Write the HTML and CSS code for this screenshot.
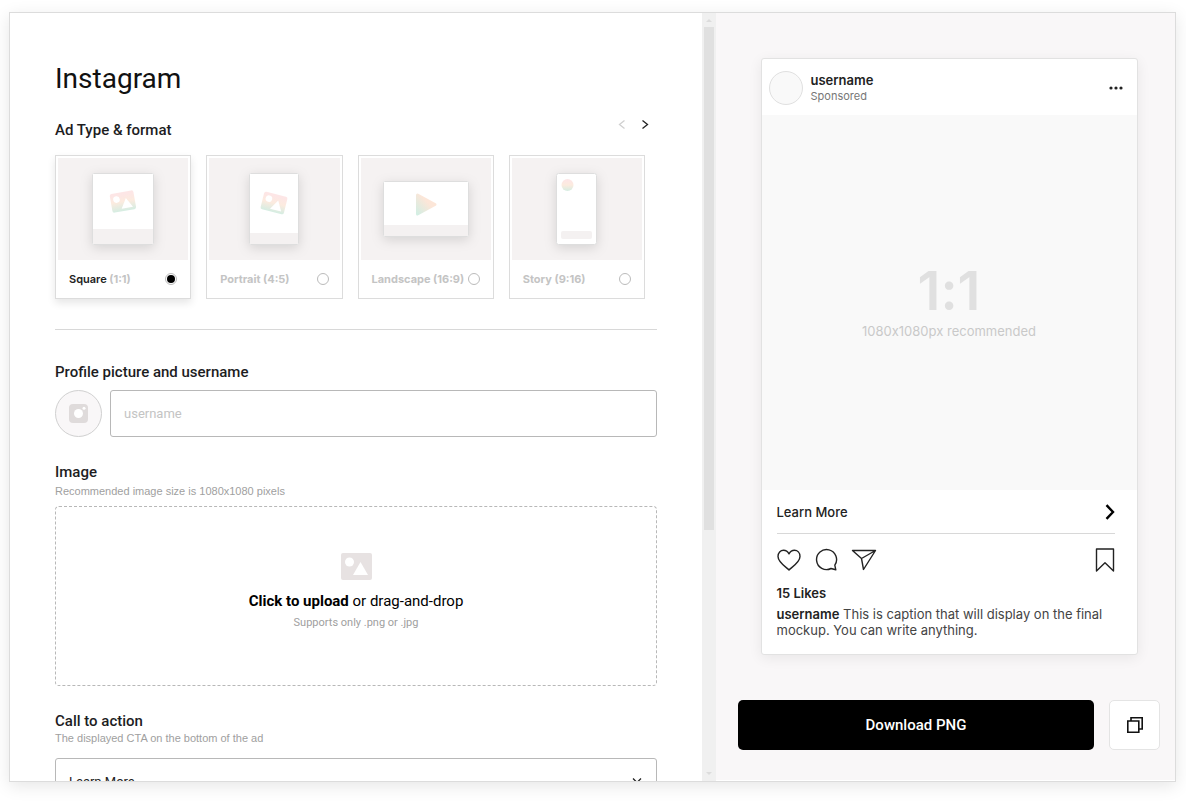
FILE: index.html
```html
<!DOCTYPE html>
<html lang="en">
<head>
    <meta charset="UTF-8" />
    <meta name="viewport" content="width=device-width, initial-scale=1" />
    <title>Instagram</title>
    <link rel="stylesheet" href="styles.css">
</head>
<body>
    <main class="window">
        <form class="editor" tabindex="0">
            <h1>Instagram</h1>

            <div class="format-head">
                <h2>Ad Type &amp; format</h2>
                <div class="arrows">
                    <button type="button" class="arrow" aria-label="Previous" disabled>
                        <svg width="8" height="10" viewBox="0 0 8 10"><path d="M6.500 0.500 1.500 4.500l5 4" /></svg>
                    </button>
                    <button type="button" class="arrow" aria-label="Next">
                        <svg width="8" height="10" viewBox="0 0 8 10"><path d="M1.500 0.500l5 4-5 4" /></svg>
                    </button>
                </div>
            </div>

            <div class="formats">
                <label class="format selected">
                    <span class="thumb">
                        <svg class="shape" width="62" height="72" viewBox="0 0 62 72">
                            <defs>
                                <linearGradient id="fade" x1="0" y1="0" x2="0" y2="1">
                                    <stop offset="0.1" stop-color="#fde6e6" />
                                    <stop offset="0.5" stop-color="#fcebdf" />
                                    <stop offset="1" stop-color="#d5ede2" />
                                </linearGradient>
                                <linearGradient id="fadePlay" x1="1" y1="0" x2="0" y2="1">
                                    <stop offset="0.4" stop-color="#fce6d8" />
                                    <stop offset="1" stop-color="#d3eee3" />
                                </linearGradient>
                            </defs>
                            <rect x="0.5" y="0.5" width="61" height="71" rx="1" fill="#fff" stroke="#dedede" />
                            <path d="M1 56h60v15H1z" fill="#f4f1f1" />
                            <g transform="rotate(-10 31 29)">
                                <rect x="19" y="19" width="24" height="19" rx="2" fill="url(#fade)" />
                                <circle cx="25" cy="25.500" r="3.300" fill="#fff" />
                                <path d="M28.500 35.500 34.500 25.500l5.500 10z" fill="#fff" />
                            </g>
                        </svg>
                    </span>
                    <span class="format-row">
                        <span><b>Square</b> (1:1)</span>
                        <input type="radio" name="format" checked>
                    </span>
                </label>
                <label class="format">
                    <span class="thumb">
                        <svg class="shape" width="50" height="72" viewBox="0 0 50 72">
                            <rect x="0.5" y="0.5" width="49" height="71" rx="1" fill="#fff" stroke="#dedede" />
                            <path d="M1 60h48v11H1z" fill="#f4f1f1" />
                            <g transform="rotate(14 25 30)">
                                <rect x="13" y="21" width="24" height="18" rx="2" fill="url(#fade)" />
                                <circle cx="19" cy="27" r="3.300" fill="#fff" />
                                <path d="M22.500 36.500 28.500 26.500l5.500 10z" fill="#fff" />
                            </g>
                        </svg>
                    </span>
                    <span class="format-row">
                        <span>Portrait (4:5)</span>
                        <input type="radio" name="format">
                    </span>
                </label>
                <label class="format">
                    <span class="thumb">
                        <svg class="shape" width="86" height="56" viewBox="0 0 86 56">
                            <rect x="0.5" y="0.5" width="85" height="55" rx="1" fill="#fff" stroke="#dedede" />
                            <path d="M1 44h84v11H1z" fill="#f4f1f1" />
                            <path d="M34.500 14 52 23.500 34.500 33z" fill="url(#fadePlay)" stroke="url(#fadePlay)" stroke-width="3" stroke-linejoin="round" />
                        </svg>
                    </span>
                    <span class="format-row">
                        <span>Landscape (16:9)</span>
                        <input type="radio" name="format">
                    </span>
                </label>
                <label class="format">
                    <span class="thumb">
                        <svg class="shape" width="41" height="72" viewBox="0 0 41 72">
                            <rect x="0.5" y="0.5" width="40" height="71" rx="2" fill="#fff" stroke="#dedede" />
                            <circle cx="11.500" cy="12" r="6" fill="url(#fade)" />
                            <rect x="5" y="58" width="31" height="8" rx="2" fill="#f4f1f1" />
                        </svg>
                    </span>
                    <span class="format-row">
                        <span>Story (9:16)</span>
                        <input type="radio" name="format">
                    </span>
                </label>
            </div>

            <hr>

            <label class="title" for="username">Profile picture and username</label>
            <div class="profile">
                <button type="button" class="picture" aria-label="Profile picture">
                    <svg width="19" height="19" viewBox="0 0 19 19">
                        <rect width="19" height="19" rx="4" fill="#dfdbdb" />
                        <circle cx="9.500" cy="9.500" r="4.500" fill="#fff" />
                        <circle cx="15" cy="4.300" r="1.500" fill="#fff" />
                    </svg>
                </button>
                <input type="text" class="field" id="username" placeholder="username">
            </div>

            <h2 class="title">Image</h2>
            <p class="hint">Recommended image size is 1080x1080 pixels</p>
            <button type="button" class="dropzone">
                <svg width="31" height="27" viewBox="0 0 31 27">
                    <rect width="31" height="27" rx="2" fill="#e7e2e2" />
                    <circle cx="8.500" cy="9" r="4.500" fill="#fff" />
                    <path d="M12 22 19.500 9 27 22z" fill="#fff" />
                </svg>
                <span class="drop-text"><b>Click to upload</b> or drag-and-drop</span>
                <span class="drop-hint">Supports only .png or .jpg</span>
            </button>

            <label class="title" for="cta">Call to action</label>
            <p class="hint cta-hint">The displayed CTA on the bottom of the ad</p>
            <div class="select-wrap">
                <select class="field" id="cta">
                    <option>Learn More</option>
                </select>
                <svg class="caret" width="10" height="8" viewBox="0 0 10 8"><path d="M1 1.500l4 4 4-4" /></svg>
            </div>
        </form>

        <div class="scrollbar" aria-hidden="true">
            <svg width="6" height="3" viewBox="0 0 6 3"><path d="M0 3 3 0l3 3z" /></svg>
            <div class="track"><div class="handle"></div></div>
            <svg width="6" height="3" viewBox="0 0 6 3"><path d="M0 0h6L3 3z" /></svg>
        </div>

        <section class="preview">
            <article class="post">
                <header class="post-head">
                    <span class="avatar"></span>
                    <div class="author">
                        <strong>username</strong>
                        <span>Sponsored</span>
                    </div>
                    <svg width="14" height="4" viewBox="0 0 14 4" fill="#222"><circle cx="2" cy="2" r="1.600" /><circle cx="7" cy="2" r="1.600" /><circle cx="12" cy="2" r="1.600" /></svg>
                </header>
                <div class="media">
                    <span class="ratio">1:1</span>
                    <span class="size">1080x1080px recommended</span>
                </div>
                <div class="post-body">
                    <div class="learn">
                        <span>Learn More</span>
                        <svg width="10" height="16" viewBox="0 0 10 16"><path d="M1.500 1.200 8 8l-6.500 6.800" fill="none" stroke="#000" stroke-width="2.400" /></svg>
                    </div>
                    <div class="actions">
                        <svg width="24" height="26" viewBox="0 0 24 26"><path d="M12 23C10 20.800 1 15.500 1 9.500 1 5.800 3.500 3.300 6.600 3.300 9.300 3.300 11 5 12 6.800c1-1.800 2.700-3.500 5.400-3.500 3.100 0 5.600 2.500 5.600 6.200 0 6-9 11.300-11 13.500z" /></svg>
                        <svg width="24" height="26" viewBox="0 0 24 26"><path d="M21.800 22.800l-1-4.600A10 10 0 1 0 17 21.500z" /></svg>
                        <svg width="26" height="26" viewBox="0 0 26 26"><path d="M1.500 3.500h23L12.500 22.500l-2-11zM10.500 11.500l14-8" /></svg>
                        <svg class="bookmark" width="20" height="26" viewBox="0 0 20 26"><path d="M1.500 2h17v22L10 15.800l-8.500 8.200z" /></svg>
                    </div>
                    <p class="likes">15 Likes</p>
                    <p class="caption"><b>username</b> This is caption that will display on the final mockup. You can write anything.</p>
                </div>
            </article>
            <div class="export">
                <button type="button" class="download">Download PNG</button>
                <button type="button" class="copy" aria-label="Copy">
                    <svg width="18" height="18" viewBox="0 0 18 18"><path d="M5 4.500V1.800h11.200V13h-2.700M1.800 5h11v11.200h-11z" /></svg>
                </button>
            </div>
        </section>
    </main>
</body>
</html>
```
FILE: styles.css
```css
* {
    box-sizing: border-box;
}
body {
    margin: 0;
    height: 100vh;
    padding: 12px 10px 22px 9px;
    background: #fff;
    color: #1d1d1f;
    font-family: Roboto, "Liberation Sans", sans-serif;
}
h1, h2, p {
    margin: 0;
}
button, input, select {
    font-family: inherit;
    margin: 0;
}
button {
    cursor: pointer;
}
.window {
    display: flex;
    height: 100%;
    border: 1px solid #dcdcdc;
    box-shadow: 0 4px 16px rgba(0,0,0,0.1);
}

/* left side */
.editor {
    flex: 1;
    min-width: 0;
    padding: 48px 45px;
    overflow: auto;
    scrollbar-width: none;
    outline: none;
}
h1 {
    font-size: 28px;
    line-height: 36px;
    font-weight: 400;
    color: #111;
}
h2, .title {
    display: block;
    font-size: 15px;
    line-height: 20px;
    font-weight: 500;
}
.format-head {
    display: flex;
    justify-content: space-between;
    margin-top: 23px;
    padding-right: 8px;
}
.arrows {
    display: flex;
    gap: 15px;
    height: 10px;
}
.arrow {
    display: flex;
    padding: 0;
    border: none;
    background: none;
}
.arrow path, .caret path {
    fill: none;
    stroke: #222;
    stroke-width: 1.3;
}
.arrow:disabled path {
    stroke: #d0d0d0;
}
.formats {
    display: grid;
    grid-template-columns: repeat(4, 1fr);
    gap: 15px;
    margin-top: 15px;
    padding-right: 12px;
}
.format {
    padding: 2px;
    border: 1px solid #dcdcdc;
    color: #c4c4c4;
    font-family: Inter, sans-serif;
    font-size: 11px;
    font-weight: 700;
    cursor: pointer;
}
.format.selected {
    box-shadow: 0 4px 8px rgba(0,0,0,0.1);
}
.format b {
    color: #222;
    font-weight: 600;
}
.thumb {
    display: flex;
    align-items: center;
    justify-content: center;
    height: 102px;
    background: #f5f2f2;
}
.shape {
    filter: drop-shadow(0 3px 6px rgba(0,0,0,0.13));
}
.format-row {
    display: flex;
    align-items: center;
    justify-content: space-between;
    height: 36px;
    padding: 1px 11px 0;
    white-space: nowrap;
}
.format input {
    appearance: none;
    flex: none;
    width: 12px;
    height: 12px;
    border: 1px solid #bbb;
    border-radius: 50%;
}
.format input:checked {
    background: #000;
    background-clip: content-box;
    padding: 1px;
}
hr {
    margin: 30px 0 32px;
    border: none;
    border-top: 1px solid #d8d8d8;
}
.profile {
    display: flex;
    gap: 8px;
    margin: 8px 0 25px;
}
.picture {
    display: flex;
    align-items: center;
    justify-content: center;
    flex: none;
    width: 47px;
    height: 47px;
    padding: 0;
    border: 1px solid #d0d0d0;
    border-radius: 50%;
    background: #f9f7f8;
}
.field {
    width: 100%;
    height: 47px;
    padding: 0 13px;
    border: 1px solid #b8b8b8;
    border-radius: 3px;
    background: #fff;
    color: #222;
    font-size: 13px;
}
.field::placeholder {
    color: #c4c4c4;
}
.hint {
    margin: 2px 0 8px;
    font-family: "Liberation Sans", Arial, sans-serif;
    font-size: 11px;
    line-height: 14px;
    color: #a0a0a0;
}
.dropzone {
    display: flex;
    flex-direction: column;
    align-items: center;
    width: 100%;
    height: 180px;
    margin-bottom: 25px;
    padding: 46px 0 0;
    border: 1px dashed #b8b8b8;
    border-radius: 4px;
    background: #fff;
}
.drop-text {
    margin-top: 11px;
    font-size: 15px;
    line-height: 20px;
    color: #000;
}
.drop-hint {
    margin-top: 5px;
    font-size: 11px;
    line-height: 14px;
    color: #a0a0a0;
}
.cta-hint {
    margin: 0 0 13px;
}
.select-wrap {
    position: relative;
}
.select-wrap .field {
    display: block;
    appearance: none;
}
.caret {
    position: absolute;
    right: 15px;
    top: 19px;
}

/* scrollbar */
.scrollbar {
    display: flex;
    flex-direction: column;
    align-items: center;
    flex: 0 0 14px;
    padding: 6px 0;
    gap: 5px;
    background: #f0f0f0;
}
.scrollbar path {
    fill: #dcdcdc;
}
.track {
    flex: 1;
    width: 10px;
}
.handle {
    height: 68%;
    background: #e0e0e0;
}

/* right side */
.preview {
    flex: 0 0 459px;
    padding: 45px 15px 30px 22px;
    border-bottom: 1px solid #fff;
    background: #f9f7f8;
}
.post {
    max-width: 377px;
    margin: 0 auto;
    border: 1px solid #e2e2e2;
    border-radius: 3px;
    background: #fff;
    box-shadow: 0 3px 14px rgba(0,0,0,0.07);
    color: #222;
    font-family: Inter, sans-serif;
    font-size: 13px;
    line-height: 16px;
    font-feature-settings: "calt" 0;
}
.post-head {
    display: flex;
    align-items: center;
    height: 56px;
    padding: 2px 14px 0 7px;
}
.avatar {
    width: 34px;
    height: 34px;
    margin-right: 8px;
    border: 1px solid #e0e0e0;
    border-radius: 50%;
    background: #f9f9f9;
}
.author {
    flex: 1;
}
.author strong, .author span {
    display: block;
}
.author strong {
    font-weight: 600;
}
.author span {
    color: #777;
    font-size: 11px;
}
.media {
    display: flex;
    flex-direction: column;
    align-items: center;
    justify-content: center;
    aspect-ratio: 1;
    padding-bottom: 7px;
    background: #f9f9f9;
}
.ratio {
    color: #e0e0e0;
    font-size: 54px;
    line-height: 64px;
    font-weight: 600;
}
.size {
    color: #c9c9c9;
}
.post-body {
    padding: 0 22px 16px 15px;
}
.learn {
    display: flex;
    align-items: center;
    justify-content: space-between;
    height: 44px;
    border-bottom: 1px solid #d8d8d8;
    font-weight: 500;
}
.actions {
    display: flex;
    gap: 13px;
    padding: 13px 0 12px;
}
.actions path {
    fill: none;
    stroke: #222;
    stroke-width: 1.4;
    stroke-linejoin: round;
}
.bookmark {
    margin-left: auto;
}
.likes {
    margin-bottom: 5px;
    font-weight: 600;
}
.caption {
    color: #444;
}
.caption b {
    color: #222;
    font-weight: 600;
}
.export {
    display: flex;
    gap: 15px;
    margin-top: 45px;
}
.download, .copy {
    height: 50px;
    border-radius: 5px;
}
.download {
    flex: 1;
    border: none;
    background: #000;
    color: #fff;
    font-size: 15px;
    font-weight: 500;
}
.copy {
    display: flex;
    align-items: center;
    justify-content: center;
    width: 51px;
    padding: 0;
    border: 1px solid #e4e4e4;
    background: #fff;
}
.copy path {
    fill: none;
    stroke: #111;
    stroke-width: 1.6;
}
```
